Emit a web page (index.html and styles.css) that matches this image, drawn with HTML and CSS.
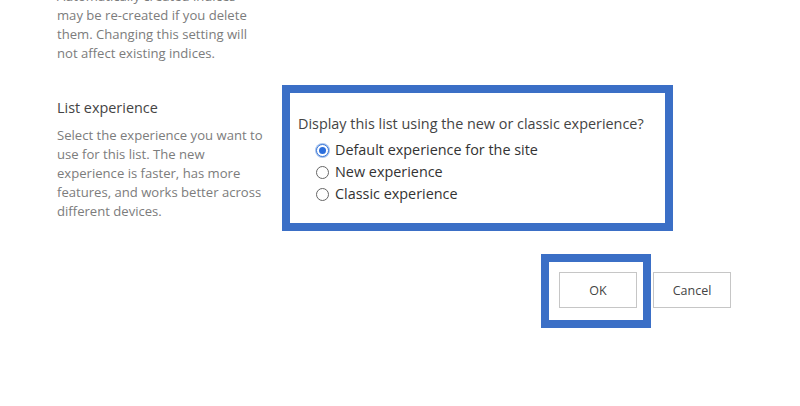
FILE: index.html
```html
<!DOCTYPE html>
<html>
<head>
<meta charset="utf-8">
<link rel="stylesheet" href="styles.css">
</head>
<body>
<div class="page">
  <div class="section top">
    <div class="info">
      <p class="desc">Automatically created indices may be re-created if you delete them. Changing this setting will not affect existing indices.</p>
    </div>
  </div>
  <div class="section list">
    <div class="info">
      <h3 class="title">List experience</h3>
      <p class="desc">Select the experience you want to use for this list. The new experience is faster, has more features, and works better across different devices.</p>
    </div>
    <div class="control highlight">
      <div class="question">Display this list using the new or classic experience?</div>
      <label class="option"><span class="radio checked"></span>Default experience for the site</label>
      <label class="option"><span class="radio"></span>New experience</label>
      <label class="option"><span class="radio"></span>Classic experience</label>
    </div>
  </div>
  <div class="buttons">
    <div class="highlight ok-wrap"><button class="btn">OK</button></div>
    <button class="btn">Cancel</button>
  </div>
</div>
</body>
</html>
```
FILE: styles.css
```css
html, body {
  margin: 0;
  padding: 0;
  background: #fff;
}
body {
  font-family: "Open Sans", "Noto Sans", sans-serif;
  width: 800px;
  height: 406px;
  overflow: hidden;
}
.page {
  padding-left: 57px;
}
.section {
  display: flex;
  align-items: flex-start;
}
.section.top {
  margin-top: -13px;
}
.info {
  width: 210px;
  flex: none;
}
.desc {
  margin: 0;
  font-size: 13.1px;
  line-height: 19px;
  color: #7c7c7c;
}
.section.top .desc {
  width: 202px;
}
.section.list {
  margin-top: 16px;
}
.title {
  margin: 19px 0 8px;
  font-size: 14.4px;
  font-weight: 400;
  line-height: 20px;
  color: #444;
}
.highlight {
  border: 8px solid #3b6fc6;
}
.control {
  margin-left: 15px;
  margin-top: 6px;
  width: 367px;
  padding: 20px 0 18px 8px;
  box-sizing: content-box;
}
.question {
  font-size: 14.4px;
  line-height: 22px;
  color: #444;
  margin-bottom: 4px;
}
.option {
  display: flex;
  align-items: center;
  font-size: 14.4px;
  line-height: 22px;
  color: #333;
  padding-left: 18px;
}
.radio {
  width: 13px;
  height: 13px;
  border: 1px solid #666;
  border-radius: 50%;
  margin-right: 6px;
  box-sizing: border-box;
  position: relative;
  flex: none;
  background: #fff;
}
.radio.checked {
  border-color: #3b78d8;
  box-shadow: 0 0 0 1px #a9c4ee;
}
.radio.checked::after {
  content: "";
  position: absolute;
  left: 2px;
  top: 2px;
  width: 7px;
  height: 7px;
  border-radius: 50%;
  background: #2d6fdc;
}
.buttons {
  display: flex;
  justify-content: flex-end;
  align-items: flex-start;
  gap: 2px;
  margin-top: 23px;
  padding-right: 69px;
}
.ok-wrap {
  padding: 10px 6px 12px 10px;
}
.btn {
  width: 78px;
  height: 36px;
  border: 1px solid #c6c6c6;
  background: #fff;
  font-family: "Open Sans", "Noto Sans", sans-serif;
  font-size: 12.5px;
  color: #444;
  padding: 0;
}
.buttons > .btn {
  margin-top: 18px;
}
```
